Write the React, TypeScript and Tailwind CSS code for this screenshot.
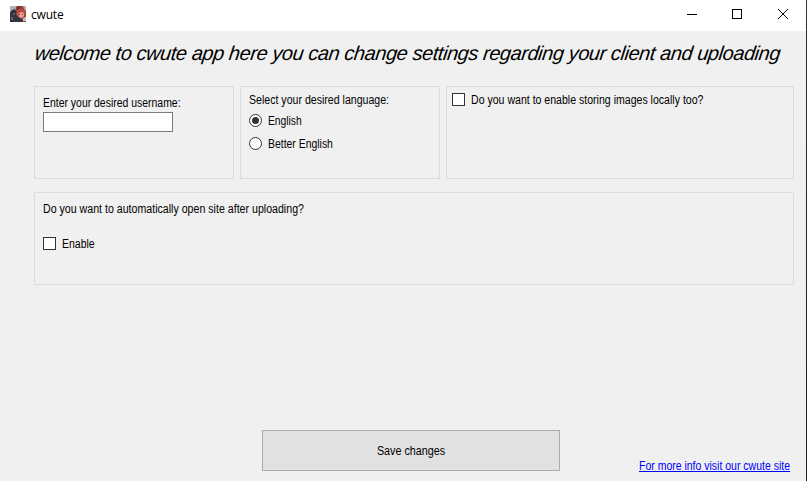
import type { ReactNode } from "react";

const label = "block w-max whitespace-nowrap text-[12px] leading-[14px]";

function Panel({ className, children }: { className: string; children?: ReactNode }) {
  return <section className={`h-[93px] border border-[#dcdcdc] ${className}`}>{children}</section>;
}

function Check() {
  return <span className="block size-[13px] shrink-0 border border-[#333] bg-white" />;
}

function Radio({ checked }: { checked?: boolean }) {
  return (
    <svg className="size-[13px] shrink-0" viewBox="0 0 13 13">
      <circle cx="6.5" cy="6.5" r="6" fill="#fff" stroke="#333" />
      {checked && <circle cx="6.5" cy="6.5" r="3.5" fill="#333" />}
    </svg>
  );
}

function Avatar() {
  return (
    <svg className="size-4 shrink-0" viewBox="0 0 16 16">
      <rect width="16" height="16" fill="#9c4640" />
      <path d="M0 0h7L5 4 0 7z" fill="#aeb0bc" />
      <path d="M1 5l3-2 3 3 1 10H0V7z" fill="#30343f" />
      <path d="M6 1l3-1h3l-2 3-3 2z" fill="#7c3638" />
      <path d="M13 0h3v5l-2-2z" fill="#c9a9a2" />
      <path d="M8 6l4-1 2 2v3l-2 2-3-1z" fill="#dfa899" />
      <path d="M7 4l4-1 4 2v4l-2-3-4 1-1 3-2-1z" fill="#c04c45" />
      <path d="M3 7h2v2H3zM1 11h2v3H1z" fill="#596277" />
      <path d="M7 11l3 1 3 2-1 2H7z" fill="#343642" />
      <path d="M13 12l3-1v4h-3z" fill="#c8c0c1" />
      <path d="M9 8h1v1H9zM12 8h1v1h-1z" fill="#583039" />
    </svg>
  );
}

export default function App() {
  return (
    <div className="flex h-[481px] w-[807px] overflow-hidden bg-[#f0f0f0] font-['Liberation_Sans',Arial,sans-serif] text-black">
      <main className="flex w-[806px] shrink-0 flex-col">
        <header className="flex h-[31px] shrink-0 bg-white pl-[10px]">
          <div className="flex pt-[6px]">
            <Avatar />
            <span className="ml-[5px] mt-px h-4 font-['Open_Sans','Noto_Sans',sans-serif] text-[12px] leading-4 tracking-[-0.2px]">cwute</span>
          </div>
          <svg className="ml-auto h-[31px] w-[138px]" viewBox="0 0 138 31" fill="none" stroke="#000" shapeRendering="crispEdges">
            <path d="M19 14.5h10M64.5 9.5h9v9h-9z" />
            <path d="M110 9l10 10M120 9l-10 10" shapeRendering="auto" />
          </svg>
        </header>

        <h1 className="ml-[35px] mt-[9px] h-[26px] w-max -skew-x-[7deg] whitespace-nowrap text-[20px] italic leading-[26px] tracking-[-0.44px]">
          welcome to cwute app here you can change settings regarding your client and uploading
        </h1>

        <div className="ml-[34px] mt-[20px] flex gap-[6px]">
          <Panel className="w-[200px] pl-[8px] pt-[9px]">
            <span className={`${label} origin-left scale-x-[0.87]`}>Enter your desired username:</span>
            <input className="mt-[2px] block h-[20px] w-[130px] rounded-none border border-[#7a7a7a] bg-white px-1 text-[12px] outline-none" />
          </Panel>
          <Panel className="w-[200px] pl-[8px] pt-[6px]">
            <span className={`${label} origin-left scale-x-[0.882]`}>Select your desired language:</span>
            <div className="mt-[7px] flex h-[13px] items-center gap-[6px]">
              <Radio checked />
              <span className={`${label} origin-left scale-x-[0.855]`}>English</span>
            </div>
            <div className="mt-[10px] flex h-[13px] items-center gap-[6px]">
              <Radio />
              <span className={`${label} origin-left scale-x-[0.869]`}>Better English</span>
            </div>
          </Panel>
          <Panel className="w-[348px] pl-[5px] pt-[6px]">
            <div className="flex h-[13px] items-center gap-[6px]">
              <Check />
              <span className={`${label} origin-left scale-x-[0.88]`}>Do you want to enable storing images locally too?</span>
            </div>
          </Panel>
        </div>

        <Panel className="ml-[34px] mt-[13px] w-[760px] shrink-0 pl-[8px] pt-[9px]">
          <span className={`${label} origin-left scale-x-[0.885]`}>Do you want to automatically open site after uploading?</span>
          <div className="mt-[21px] flex h-[13px] items-center gap-[6px]">
            <Check />
            <span className={`${label} origin-left scale-x-[0.874]`}>Enable</span>
          </div>
        </Panel>

        <footer className="mt-[145px] flex h-[51px] shrink-0 pl-[262px]">
          <button className="flex h-[41px] w-[298px] shrink-0 items-center justify-center border border-[#adadad] bg-[#e1e1e1]">
            <span className={`${label} origin-center scale-x-[0.897]`}>Save changes</span>
          </button>
          <a className={`${label} ml-[79px] mt-[29px] h-[14px] shrink-0 origin-left scale-x-[0.874] text-[#0000ff] underline underline-offset-1`}>
            For more info visit our cwute site
          </a>
        </footer>
      </main>
      <div className="w-px shrink-0 bg-linear-to-b from-[#4b2947] via-[#292b30] via-10% to-[#202225]" />
    </div>
  );
}
